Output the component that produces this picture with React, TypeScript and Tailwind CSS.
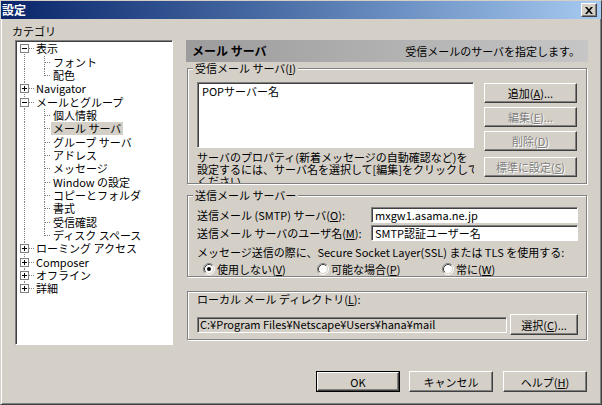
import React from 'react';

const raised =
  'border border-t-white border-l-white border-r-[#404040] border-b-[#404040] shadow-[inset_-1px_-1px_#808080] bg-[#d4d0c8]';
const sunken =
  'border border-t-[#808080] border-l-[#808080] border-r-white border-b-white shadow-[inset_1px_1px_#404040]';
const etched = 'border border-[#808080] shadow-[inset_1px_1px_#fff,1px_1px_#fff]';

type BtnProps = {
  children: React.ReactNode;
  disabled?: boolean;
  isDefault?: boolean;
  className?: string;
};

function Btn({ children, disabled, isDefault, className }: BtnProps) {
  const inner = (
    <div
      className={`${raised} flex h-full w-full items-center justify-center leading-[12px] ${
        disabled ? 'text-[#808080] [text-shadow:1px_1px_0_#fff]' : 'text-black'
      }`}
    >
      {children}
    </div>
  );
  if (isDefault) {
    return <div className={`border border-black ${className || ''}`}>{inner}</div>;
  }
  return <div className={className}>{inner}</div>;
}

function Radio({ checked }: { checked?: boolean }) {
  return (
    <svg width="12" height="12" viewBox="0 0 12 12" className="shrink-0">
      <circle cx="6" cy="6" r="5" fill="#fff" />
      <path d="M2.11 9.89 A5.5 5.5 0 0 1 9.89 2.11" fill="none" stroke="#808080" />
      <path d="M9.89 2.11 A5.5 5.5 0 0 1 2.11 9.89" fill="none" stroke="#fff" />
      <path d="M2.82 9.18 A4.5 4.5 0 0 1 9.18 2.82" fill="none" stroke="#404040" />
      <path d="M9.18 2.82 A4.5 4.5 0 0 1 2.82 9.18" fill="none" stroke="#d4d0c8" />
      {checked && <circle cx="6" cy="6" r="2" fill="#000" />}
    </svg>
  );
}

type Node = {
  label: string;
  depth: 0 | 1;
  exp?: '+' | '-';
  lastChild?: boolean;
  first?: boolean;
  last?: boolean;
  sel?: boolean;
};

const nodes: Node[] = [
  { label: '表示', depth: 0, exp: '-', first: true },
  { label: 'フォント', depth: 1 },
  { label: '配色', depth: 1, lastChild: true },
  { label: 'Navigator', depth: 0, exp: '+' },
  { label: 'メールとグループ', depth: 0, exp: '-' },
  { label: '個人情報', depth: 1 },
  { label: 'メール サーバ', depth: 1, sel: true },
  { label: 'グループ サーバ', depth: 1 },
  { label: 'アドレス', depth: 1 },
  { label: 'メッセージ', depth: 1 },
  { label: 'Window の設定', depth: 1 },
  { label: 'コピーとフォルダ', depth: 1 },
  { label: '書式', depth: 1 },
  { label: '受信確認', depth: 1 },
  { label: 'ディスク スペース', depth: 1, lastChild: true },
  { label: 'ローミング アクセス', depth: 0, exp: '+' },
  { label: 'Composer', depth: 0, exp: '+' },
  { label: 'オフライン', depth: 0, exp: '+' },
  { label: '詳細', depth: 0, exp: '+', last: true },
];

function TreeRow({ n }: { n: Node }) {
  const dot = { stroke: '#808080', strokeDasharray: '1 1', shapeRendering: 'crispEdges' as const };
  return (
    <div className="flex h-[13.35px] items-center">
      {n.depth === 0 ? (
        <svg width="17" height="13" viewBox="0 0 17 13" className="shrink-0">
          <line x1="7.5" y1={n.first ? 6 : 0} x2="7.5" y2={n.last ? 7 : 13} {...dot} />
          <line x1="12" y1="6.5" x2="17" y2="6.5" {...dot} />
          <rect x="3.5" y="2.5" width="8" height="8" fill="#fff" stroke="#808080" shapeRendering="crispEdges" />
          <line x1="5" y1="6.5" x2="10" y2="6.5" stroke="#000" shapeRendering="crispEdges" />
          {n.exp === '+' && (
            <line x1="7.5" y1="4" x2="7.5" y2="9" stroke="#000" shapeRendering="crispEdges" />
          )}
        </svg>
      ) : (
        <svg width="34" height="13" viewBox="0 0 34 13" className="shrink-0">
          <line x1="7.5" y1="0" x2="7.5" y2="13" {...dot} />
          <line x1="27.5" y1="0" x2="27.5" y2={n.lastChild ? 7 : 13} {...dot} />
          <line x1="28" y1="6.5" x2="34" y2="6.5" {...dot} />
        </svg>
      )}
      <span className={`px-[2px] leading-[13px] whitespace-nowrap ${n.sel ? 'bg-[#d4d0c8]' : ''}`}>
        {n.label}
      </span>
    </div>
  );
}

export default function App() {
  return (
    <div
      className={`flex h-[405px] w-[602px] flex-col overflow-hidden border border-t-[#d4d0c8] border-l-[#d4d0c8] border-r-[#404040] border-b-[#404040] bg-[#d4d0c8] text-[11px] text-black shadow-[inset_1px_1px_#fff,inset_-1px_-1px_#808080] font-['MS_UI_Gothic','Noto_Sans_CJK_JP',sans-serif]`}
    >
      {/* title bar */}
      <div className="flex h-[18px] shrink-0 items-center bg-linear-to-r from-[#0a246a] to-[#a6caf0]">
        <span className="pl-[1px] text-[12px] font-bold leading-[14px] text-white">設定</span>
        <div className={`${raised} ml-auto mr-[4px] flex h-[14px] w-[16px] items-center justify-center`}>
          <svg width="8" height="7" viewBox="0 0 8 7">
            <path d="M0 0h2l2 2.2L6 0h2L5 3.5 8 7H6L4 4.8 2 7H0l3-3.5z" fill="#000" />
          </svg>
        </div>
      </div>

      <div className="flex items-start">
        {/* left: category tree */}
        <div className="flex flex-col">
          <div className="ml-[11px] mt-[6px] h-[12px] leading-[12px]">カテゴリ</div>
          <div className={`${sunken} ml-[14px] mt-[3px] h-[305px] w-[158px] bg-white pt-[1px] pl-[1px]`}>
            {nodes.map((n, i) => (
              <TreeRow key={i} n={n} />
            ))}
          </div>
        </div>

        {/* right: settings page */}
        <div className="ml-[13px] mt-[21px] flex w-[402px] flex-col">
          <div className="flex h-[22px] items-center justify-between bg-linear-to-r from-[#9c9c9c] to-[#c6c6c6] pl-[6px] pr-[8px]">
            <span className="text-[12px] font-bold">メール サーバ</span>
            <span>受信メールのサーバを指定します。</span>
          </div>

          {/* incoming */}
          <div className={`${etched} ml-[1px] mt-[6px] flex h-[116px] w-[400px] flex-col`}>
            <span className="-mt-[7px] ml-[5px] h-[12px] self-start bg-[#d4d0c8] px-[2px] leading-[12px]">
              受信メール サーバ(<u>I</u>)
            </span>
            <div className="mt-[8px] flex pl-[9px]">
              <div className="flex h-[101px] w-[277px] flex-col overflow-hidden">
                <div className={`${sunken} h-[66px] shrink-0 bg-white pl-[4px] pt-[2px] leading-[12px]`}>
                  POPサーバー名
                </div>
                <div className="mt-[3px] leading-[12px] whitespace-nowrap">
                  サーバのプロパティ(新着メッセージの自動確認など)を
                  <br />
                  設定するには、サーバ名を選択して[編集]をクリックして
                  <br />
                  ください。
                </div>
              </div>
              <div className="ml-[10px] flex w-[93px] flex-col gap-[4px] pt-[1px]">
                <Btn className="h-[20px]">
                  追加(<u>A</u>)...
                </Btn>
                <Btn className="h-[20px]" disabled>
                  編集(<u>E</u>)...
                </Btn>
                <Btn className="h-[20px]" disabled>
                  削除(<u>D</u>)
                </Btn>
                <Btn className="mt-[2px] h-[20px]" disabled>
                  標準に設定(<u>S</u>)
                </Btn>
              </div>
            </div>
          </div>

          {/* outgoing */}
          <div className={`${etched} ml-[1px] mt-[11px] flex h-[82px] w-[400px] flex-col`}>
            <span className="-mt-[7px] ml-[5px] h-[12px] self-start bg-[#d4d0c8] px-[2px] leading-[12px]">
              送信メール サーバー
            </span>
            <div className="mt-[6px] flex h-[16px] items-center pl-[9px]">
              <span className="w-[174px] whitespace-nowrap">
                送信メール (SMTP) サーバ(<u>O</u>):
              </span>
              <div className={`${sunken} flex h-[16px] w-[207px] items-center bg-white pl-[3px]`}>
                mxgw1.asama.ne.jp
              </div>
            </div>
            <div className="mt-[2px] flex h-[16px] items-center pl-[9px]">
              <span className="w-[174px] whitespace-nowrap">
                送信メール サーバのユーザ名(<u>M</u>):
              </span>
              <div className={`${sunken} flex h-[16px] w-[207px] items-center bg-white pl-[3px]`}>
                SMTP認証ユーザー名
              </div>
            </div>
            <div className="mt-[5px] h-[12px] pl-[9px] leading-[12px] whitespace-nowrap">
              メッセージ送信の際に、Secure Socket Layer(SSL) または TLS を使用する:
            </div>
            <div className="mt-[5px] flex h-[12px] items-center pl-[15px] leading-[12px]">
              <div className="flex w-[114px] items-center gap-[2px]">
                <Radio checked />
                <span>
                  使用しない(<u>V</u>)
                </span>
              </div>
              <div className="flex w-[125px] items-center gap-[2px]">
                <Radio />
                <span>
                  可能な場合(<u>P</u>)
                </span>
              </div>
              <div className="flex items-center gap-[2px]">
                <Radio />
                <span>
                  常に(<u>W</u>)
                </span>
              </div>
            </div>
          </div>

          {/* local dir */}
          <div className={`${etched} ml-[1px] mt-[14px] flex h-[49px] w-[400px] flex-col`}>
            <div className="mt-[1px] h-[12px] pl-[9px] leading-[12px]">
              ローカル メール ディレクトリ(<u>L</u>):
            </div>
            <div className="mt-[9px] flex h-[21px] items-center pl-[9px]">
              <div className={`${sunken} flex h-[16px] w-[310px] items-center bg-[#d4d0c8] pl-[2px] whitespace-nowrap`}>
                C:¥Program Files¥Netscape¥Users¥hana¥mail
              </div>
              <Btn className="ml-[3px] h-[21px] w-[68px]">
                選択(<u>C</u>)...
              </Btn>
            </div>
          </div>
        </div>
      </div>

      {/* dialog buttons */}
      <div className="mt-[26px] flex pl-[315px]">
        <Btn isDefault className="h-[21px] w-[84px]">
          OK
        </Btn>
        <Btn className="ml-[9px] h-[21px] w-[84px]">キャンセル</Btn>
        <Btn className="ml-[10px] h-[21px] w-[84px]">
          ヘルプ(<u>H</u>)
        </Btn>
      </div>
    </div>
  );
}
